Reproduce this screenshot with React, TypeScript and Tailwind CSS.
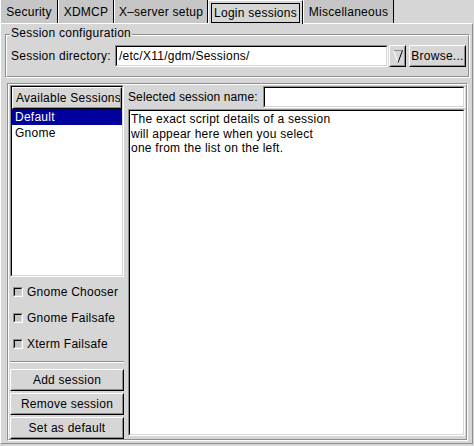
import React from 'react';

// GTK1-style bevel helpers
const Raised: React.FC<{ className?: string; inner?: string; children?: React.ReactNode }> = ({ className = '', inner = '', children }) => (
  <div className={`border border-t-white border-l-white border-r-black border-b-black bg-[#d6d6d6] ${className}`}>
    <div className={`h-full w-full border border-t-transparent border-l-transparent border-r-[#8e8e8e] border-b-[#8e8e8e] flex items-center ${inner}`}>
      {children}
    </div>
  </div>
);

const Sunken: React.FC<{ className?: string; inner?: string; children?: React.ReactNode }> = ({ className = '', inner = '', children }) => (
  <div className={`border border-t-[#8e8e8e] border-l-[#8e8e8e] border-r-white border-b-white ${className}`}>
    <div className={`h-full w-full border border-t-black border-l-black border-r-[#d6d6d6] border-b-[#d6d6d6] bg-white ${inner}`}>
      {children}
    </div>
  </div>
);

const Etched: React.FC<{ className?: string; inner?: string; children?: React.ReactNode }> = ({ className = '', inner = '', children }) => (
  <div className={`border border-t-[#8e8e8e] border-l-[#8e8e8e] border-r-white border-b-white ${className}`}>
    <div className={`h-full w-full border border-t-white border-l-white border-r-[#8e8e8e] border-b-[#8e8e8e] ${inner}`}>
      {children}
    </div>
  </div>
);

const TABS = [
  { label: 'Security', w: 'w-[58px]' },
  { label: 'XDMCP', w: 'w-[56px]' },
  { label: 'X\u2013server setup', w: 'w-[94px]' },
  { label: 'Login sessions', w: 'w-[95px]', active: true },
  { label: 'Miscellaneous', w: 'w-[91px]' },
];

const SESSIONS = ['Default', 'Gnome'];
const OPTIONS = ['Gnome Chooser', 'Gnome Failsafe', 'Xterm Failsafe'];
const ACTIONS = ['Add session', 'Remove session', 'Set as default'];

export default function App() {
  return (
    <div className="w-[474px] h-[446px] bg-[#d6d6d6] font-['Liberation_Sans',Arial,sans-serif] text-[12px] tracking-[0.25px] text-black flex flex-col overflow-hidden select-none">

      {/* ── Tabs ── */}
      <div className="flex h-[23px] shrink-0">
        {TABS.map(t =>
          t.active ? (
            <div key={t.label} className={`${t.w} h-[24px] relative z-10 bg-[#d6d6d6] border-l border-t border-white border-r border-r-black flex items-center justify-center`}>
              <span className="border border-black px-[2px] h-[20px] leading-[18px] whitespace-nowrap">{t.label}</span>
            </div>
          ) : (
            <div key={t.label} className={`${t.w} h-[23px] bg-[#c6c6c6] border-l border-white border-r border-r-black flex items-center justify-center whitespace-nowrap`}>
              {t.label}
            </div>
          )
        )}
      </div>

      {/* ── Notebook page ── */}
      <div className="w-[473px] h-[421px] border-t border-l border-white border-r border-b border-r-[#8e8e8e] border-b-[#8e8e8e] pt-[10px]">

        {/* Session configuration frame */}
        <div className="relative ml-[4px] w-[465px] h-[44px]">
          <Etched className="h-full w-full" inner="pt-[9px] pl-[4px] pr-[2px] flex">
            <div className="flex items-center h-[22px] w-full">
              <span className="w-[104px] whitespace-nowrap">Session directory:</span>
              <Sunken className="w-[273px] h-[22px]" inner="flex items-center pl-[2px]">
                <span className="whitespace-nowrap">/etc/X11/gdm/Sessions/</span>
              </Sunken>
              <Raised className="w-[17px] h-[22px] ml-[1px]" inner="justify-center">
                <svg width="10" height="13" viewBox="0 0 10 13">
                  <path d="M0.5 0.5 H9.5" stroke="#8e8e8e" />
                  <path d="M0.5 0.5 L5 12.5" stroke="#ffffff" />
                  <path d="M9.5 0.5 L5 12.5" stroke="#000000" />
                </svg>
              </Raised>
              <Raised className="w-[57px] h-[22px] ml-[3px]" inner="justify-center">
                <span className="whitespace-nowrap">Browse...</span>
              </Raised>
            </div>
          </Etched>
          <span className="absolute left-[5px] top-[-8px] bg-[#d6d6d6] px-[1px] leading-[14px] whitespace-nowrap">Session configuration</span>
        </div>

        {/* Sessions frame */}
        <Etched className="ml-[6px] mt-[5px] w-[461px] h-[358px]" inner="flex pl-[1px] gap-[4px]">

          {/* left column */}
          <div className="w-[114px] flex flex-col">
            <Sunken className="w-full h-[192px]" inner="flex flex-col overflow-hidden">
              <Raised className="h-[22px] shrink-0" inner="pl-[2px] overflow-hidden">
                <span className="whitespace-nowrap">Available Sessions</span>
              </Raised>
              {SESSIONS.map((s, i) => (
                <div key={s} className={`h-[16px] leading-[16px] pl-[3px] ${i === 0 ? 'bg-[#00009c] text-white' : ''}`}>{s}</div>
              ))}
            </Sunken>

            <div className="mt-[2px] flex flex-col">
              {OPTIONS.map(o => (
                <div key={o} className="h-[26px] flex items-center pl-[3px] gap-[4px]">
                  <span className="w-[10px] h-[10px] border border-t-[#8e8e8e] border-l-[#8e8e8e] border-r-white border-b-white">
                    <span className="block w-full h-full border border-t-black border-l-black border-r-[#d6d6d6] border-b-[#d6d6d6] bg-[#c6c6c6]" />
                  </span>
                  <span className="whitespace-nowrap">{o}</span>
                </div>
              ))}
            </div>

            <div className="mt-[4px] h-[2px] border-t border-t-[#8e8e8e] border-b border-b-white" />

            <div className="mt-[6px] flex flex-col gap-[2px]">
              {ACTIONS.map(a => (
                <Raised key={a} className="h-[22px]" inner="justify-center">
                  <span className="whitespace-nowrap">{a}</span>
                </Raised>
              ))}
            </div>
          </div>

          {/* right column */}
          <div className="w-[337px] flex flex-col pt-[1px]">
            <div className="flex items-center h-[22px]">
              <span className="whitespace-nowrap tracking-[0.1px]">Selected session name:</span>
              <Sunken className="ml-auto w-[202px] h-[22px]" />
            </div>
            <Sunken className="mt-[1px] h-[327px]" inner="pl-[1px] pt-[1px] leading-[14.5px]">
              <div>The exact script details of a session</div>
              <div>will appear here when you select</div>
              <div>one from the list on the left.</div>
            </Sunken>
          </div>
        </Etched>
      </div>
    </div>
  );
}
